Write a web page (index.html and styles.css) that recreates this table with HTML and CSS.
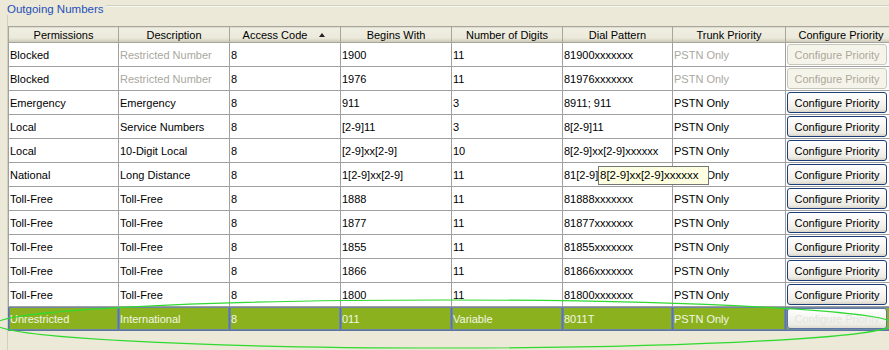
FILE: index.html
```html
<!DOCTYPE html>
<html>
<head>
<meta charset="utf-8">
<link rel="stylesheet" href="styles.css">
</head>
<body>
<div class="panel">
  <div class="legend-row"><span class="legend">Outgoing Numbers</span><span class="rule"></span></div>
  <div class="content">
    <table class="grid">
      <colgroup>
        <col class="c110"><col class="c111"><col class="c111"><col class="c111"><col class="c111"><col class="c110"><col class="c113"><col class="c111">
      </colgroup>
      <thead>
        <tr>
          <th>Permissions</th><th>Description</th><th class="sorted">Access Code<span class="arrow"></span></th><th>Begins With</th><th>Number of Digits</th><th>Dial Pattern</th><th>Trunk Priority</th><th>Configure Priority</th>
        </tr>
      </thead>
      <tbody>
        <tr><td>Blocked</td><td class="dim">Restricted Number</td><td>8</td><td>1900</td><td>11</td><td>81900xxxxxxx</td><td class="dim">PSTN Only</td><td class="bc"><button class="btn disabled">Configure Priority</button></td></tr>
        <tr><td>Blocked</td><td class="dim">Restricted Number</td><td>8</td><td>1976</td><td>11</td><td>81976xxxxxxx</td><td class="dim">PSTN Only</td><td class="bc"><button class="btn disabled">Configure Priority</button></td></tr>
        <tr><td>Emergency</td><td>Emergency</td><td>8</td><td>911</td><td>3</td><td>8911; 911</td><td>PSTN Only</td><td class="bc"><button class="btn">Configure Priority</button></td></tr>
        <tr><td>Local</td><td>Service Numbers</td><td>8</td><td>[2-9]11</td><td>3</td><td>8[2-9]11</td><td>PSTN Only</td><td class="bc"><button class="btn">Configure Priority</button></td></tr>
        <tr><td>Local</td><td>10-Digit Local</td><td>8</td><td>[2-9]xx[2-9]</td><td>10</td><td>8[2-9]xx[2-9]xxxxxx</td><td>PSTN Only</td><td class="bc"><button class="btn">Configure Priority</button></td></tr>
        <tr><td>National</td><td>Long Distance</td><td>8</td><td>1[2-9]xx[2-9]</td><td>11</td><td>81[2-9]xx[2-9]xxxxxx</td><td>PSTN Only</td><td class="bc"><button class="btn">Configure Priority</button></td></tr>
        <tr><td>Toll-Free</td><td>Toll-Free</td><td>8</td><td>1888</td><td>11</td><td>81888xxxxxxx</td><td>PSTN Only</td><td class="bc"><button class="btn">Configure Priority</button></td></tr>
        <tr><td>Toll-Free</td><td>Toll-Free</td><td>8</td><td>1877</td><td>11</td><td>81877xxxxxxx</td><td>PSTN Only</td><td class="bc"><button class="btn">Configure Priority</button></td></tr>
        <tr><td>Toll-Free</td><td>Toll-Free</td><td>8</td><td>1855</td><td>11</td><td>81855xxxxxxx</td><td>PSTN Only</td><td class="bc"><button class="btn">Configure Priority</button></td></tr>
        <tr><td>Toll-Free</td><td>Toll-Free</td><td>8</td><td>1866</td><td>11</td><td>81866xxxxxxx</td><td>PSTN Only</td><td class="bc"><button class="btn">Configure Priority</button></td></tr>
        <tr><td>Toll-Free</td><td>Toll-Free</td><td>8</td><td>1800</td><td>11</td><td>81800xxxxxxx</td><td>PSTN Only</td><td class="bc"><button class="btn">Configure Priority</button></td></tr>
        <tr class="selected"><td>Unrestricted</td><td>International</td><td>8</td><td>011</td><td>Variable</td><td>8011T</td><td>PSTN Only</td><td class="bc"><button class="btn sel">Configure Priority</button></td></tr>
      </tbody>
    </table>
  </div>
  <div class="tooltip">8[2-9]xx[2-9]xxxxxx</div>
  <svg class="ellipse" width="889" height="350" viewBox="0 0 889 350">
    <ellipse cx="445" cy="324" rx="449" ry="24" fill="none" stroke="#2fd92f" stroke-width="1.2"/>
  </svg>
</div>
</body>
</html>
```

FILE: styles.css
```css
html, body {
  margin: 0;
  padding: 0;
  background: #ECE9D8;
}
body {
  font-family: "Liberation Sans", Arial, sans-serif;
  font-size: 11px;
  color: #000;
}
.panel {
  position: relative;
  width: 889px;
  height: 350px;
  overflow: hidden;
}
.legend-row {
  display: flex;
  align-items: flex-start;
  height: 15px;
  padding-left: 7px;
}
.legend {
  font-size: 11.5px;
  line-height: 12px;
  margin-top: 3px;
  color: #1E4FB8;
  padding-right: 2px;
}
.rule {
  flex: 1;
  margin-top: 5px;
  border-top: 1px solid #D0D0BF;
  border-bottom: 1px solid #F7F6F0;
}
.content {
  margin-left: 7px;
  border-left: 1px solid #D0D0BF;
  padding-top: 11px;
  height: 400px;
}
.grid {
  border-collapse: collapse;
  table-layout: fixed;
  width: 888px;
}
.c110 { width: 110px; }
.c111 { width: 111px; }
.c113 { width: 113px; }
.grid th {
  height: 15px;
  padding: 0;
  font-weight: normal;
  font-size: 11px;
  text-align: center;
  background: linear-gradient(#EFEEE2 0%, #EBEADB 70%, #E2DECD 80%, #D6D2C2 90%, #CBC7B8 100%);
  border: 1px solid #A7A69A;
  color: #000;
  white-space: nowrap;
  position: relative;
}
.grid th.sorted {
  padding-right: 20px;
}
.arrow {
  position: absolute;
  right: 15px;
  top: 6px;
  width: 0;
  height: 0;
  border-left: 3px solid transparent;
  border-right: 3px solid transparent;
  border-bottom: 4px solid #222;
}
.grid td {
  height: 23px;
  padding: 0 2px 0 1px;
  background: #fff;
  border: 1px solid #A0A0A0;
  white-space: nowrap;
  overflow: hidden;
  vertical-align: middle;
  font-size: 11px;
}
.grid td.dim {
  color: #A8A8A0;
}
.grid td.bc {
  padding: 0 0 0 1px;
}
.btn {
  display: block;
  width: 100px;
  height: 21px;
  padding: 0;
  margin: 0;
  border: 1px solid #1E3F75;
  border-radius: 3px;
  background: linear-gradient(#FFFFFF 0%, #F6F5F1 50%, #ECEBE4 85%, #D8D3C8 100%);
  font-family: "Liberation Sans", Arial, sans-serif;
  font-size: 11px;
  color: #000;
  text-align: center;
  white-space: nowrap;
  overflow: hidden;
}
.btn.disabled {
  border-color: #C9C7BA;
  background: #F5F4EA;
  color: #ACA899;
}
.grid tr.selected td {
  background: #8CB11F;
  color: #F2F7E6;
  border: 1px solid #5A76A0;
  box-shadow: inset 0 0 0 1px #6E87A6;
}
.btn.sel {
  border-color: #5A76A0;
  background: linear-gradient(#FFFFFF, #EEEEE8 80%, #DEDBD0);
  color: #E4E4DE;
}
.tooltip {
  position: absolute;
  left: 598px;
  top: 166px;
  width: 107px;
  height: 17px;
  line-height: 17px;
  padding: 0 1px 0 1px;
  background: #FFFFE1;
  border: 1px solid #767676;
  font-size: 11.5px;
  color: #000;
  white-space: nowrap;
  overflow: hidden;
}
.ellipse {
  position: absolute;
  left: 0;
  top: 0;
  pointer-events: none;
}
```
